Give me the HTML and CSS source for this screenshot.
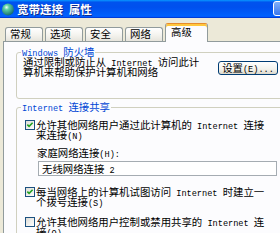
FILE: index.html
```html
<!DOCTYPE html>
<html lang="zh-CN">
<head>
<meta charset="utf-8">
<title>宽带连接 属性</title>
<link rel="stylesheet" href="styles.css">
</head>
<body>
<div class="window">
  <div class="titlebar">
    <svg class="appicon" width="14" height="14" viewBox="0 0 14 14">
      <defs>
        <radialGradient id="globe" cx="38%" cy="32%" r="70%">
          <stop offset="0" stop-color="#F2FFF8"/>
          <stop offset="0.3" stop-color="#5CCFA4"/>
          <stop offset="1" stop-color="#136A70"/>
        </radialGradient>
      </defs>
      <circle cx="7" cy="7.5" r="6" fill="url(#globe)"/>
    </svg>
    <span class="title">宽带连接&ensp;属性</span>
    <span class="ctlbtn"></span>
  </div>
  <div class="tabs">
    <div class="tab">常规</div>
    <div class="tab">选项</div>
    <div class="tab">安全</div>
    <div class="tab">网络</div>
    <div class="tab active">高级</div>
  </div>
  <div class="panel">
    <fieldset class="group g1">
      <legend><span class="en">Windows </span>防火墙</legend>
      <div class="fw-row">
        <p class="desc">通过限制或防止从<span class="en"> Internet </span>访问此计<br>算机来帮助保护计算机和网络</p>
        <button class="btn" type="button">设置<span class="en">(E)...</span></button>
      </div>
    </fieldset>
    <fieldset class="group g2">
      <legend><span class="en">Internet </span>连接共享</legend>
      <div class="check-row r1">
        <span class="cb"><svg width="8" height="8" viewBox="0 0 8 8"><polyline points="1.3,3.6 3.1,5.4 6.6,1.8" fill="none" stroke="#21A121" stroke-width="1.6"/></svg></span>
        <p>允许其他网络用户通过此计算机的<span class="en"> Internet </span>连接<br>来连接<span class="en">(N)</span></p>
      </div>
      <div class="field-label">家庭网络连接<span class="en">(H):</span></div>
      <div class="textbox">无线网络连接<span class="en"> 2</span></div>
      <div class="check-row r2">
        <span class="cb"><svg width="8" height="8" viewBox="0 0 8 8"><polyline points="1.3,3.6 3.1,5.4 6.6,1.8" fill="none" stroke="#21A121" stroke-width="1.6"/></svg></span>
        <p>每当网络上的计算机试图访问<span class="en"> Internet </span>时建立一<br>个拨号连接<span class="en">(S)</span></p>
      </div>
      <div class="check-row r3">
        <span class="cb"></span>
        <p>允许其他网络用户控制或禁用共享的<span class="en"> Internet </span>连<br>接<span class="en">(O)</span></p>
      </div>
    </fieldset>
  </div>
</div>
</body>
</html>
```

FILE: styles.css
```css
* { box-sizing: border-box; }
html, body { margin: 0; padding: 0; }
body {
  width: 280px;
  height: 233px;
  overflow: hidden;
  background: #ECE9D8;
  font-family: "Noto Sans CJK SC", sans-serif;
  font-size: 10.4px;
  line-height: 10px;
  color: #000;
}
.window { width: 280px; height: 233px; overflow: hidden; }

.en {
  font-family: "Liberation Mono", monospace;
  font-size: 8.6px;
  line-height: 0;
}

.titlebar {
  position: relative;
  height: 18px;
  display: flex;
  align-items: center;
  gap: 2px;
  padding-left: 1px;
  background: linear-gradient(180deg, #0997ff, #0053ee 12%, #0050ee 40%, #0060fc 86%, #005bff 92%, #003dd7 96%, #003dd7);
}
.appicon { flex: 0 0 auto; }
.title {
  color: #fff;
  font-weight: 700;
  font-size: 11.5px;
  line-height: 12px;
  text-shadow: 1px 1px 0 #0a2a8c;
}
.ctlbtn {
  position: absolute;
  top: 1px;
  right: -9px;
  width: 16px;
  height: 15px;
  border: 1px solid #fff;
  border-radius: 3px;
  background: linear-gradient(180deg, #7fb0fa, #3a78ee);
}

.tabs {
  position: relative;
  z-index: 1;
  height: 23px;
  padding-left: 5px;
  display: flex;
  align-items: flex-end;
  gap: 2px;
}
.tab {
  width: 38px;
  height: 14px;
  padding-left: 4px;
  line-height: 11px;
  border: 1px solid #919B9C;
  border-bottom: none;
  border-radius: 3px 3px 0 0;
  background: linear-gradient(180deg, #ffffff, #f4f3ee 55%, #e6e4dc);
  white-space: nowrap;
}
.tab.active {
  width: 43px;
  height: 19px;
  margin-bottom: -1px;
  padding-left: 5px;
  padding-top: 2px;
  border-top: 1px solid #E68B2C;
  background: #FCFCFE;
  box-shadow: inset 0 2px 0 #FFC73C;
}

.panel {
  margin-left: 3px;
  width: 300px;
  height: 200px;
  background: #FCFCFE;
  border-top: 1px solid #919B9C;
  border-left: 1px solid #919B9C;
  padding: 5px 0 0 12px;
}

.group {
  margin: 0;
  padding: 0 0 21px 6px;
  border: 1px solid #D0D0BF;
  border-radius: 3px;
  min-width: 0;
  width: 300px;
}
.group legend {
  padding: 0 1px;
  margin-left: -2px;
  line-height: 10px;
  color: #0046D5;
}
.g2 { margin-top: 3px; }

.fw-row { display: flex; align-items: flex-start; }
.desc {
  margin: 0;
  flex: 0 0 195px;
  white-space: nowrap;
}
.btn {
  margin: 4px 0 0 0;
  padding: 0;
  width: 60px;
  height: 14px;
  font: inherit;
  line-height: 12px;
  color: #000;
  border: 1px solid #003C74;
  border-radius: 3px;
  background: linear-gradient(180deg, #ffffff, #f3f2ec 60%, #dcd8cc);
  white-space: nowrap;
}

.check-row {
  display: flex;
  align-items: flex-start;
  gap: 1px;
  margin-left: 2px;
}
.check-row p { margin: 0; white-space: nowrap; }
.r1 { margin-top: 8px; }
.r2 { margin-top: 11px; }
.r3 { margin-top: 10px; }
.cb {
  flex: 0 0 10px;
  width: 10px;
  height: 10px;
  margin-top: 0;
  border: 1px solid #1C5180;
  background: linear-gradient(135deg, #dcdcd7, #ffffff);
  display: flex;
  align-items: center;
  justify-content: center;
}
.cb svg { display: block; }

.field-label { margin: 8px 0 0 14px; white-space: nowrap; }
.textbox {
  margin: 3px 0 0 15px;
  width: 239px;
  height: 15px;
  padding-left: 3px;
  line-height: 13px;
  border: 1px solid #A5ACB2;
  background: #fff;
  white-space: nowrap;
}
```
